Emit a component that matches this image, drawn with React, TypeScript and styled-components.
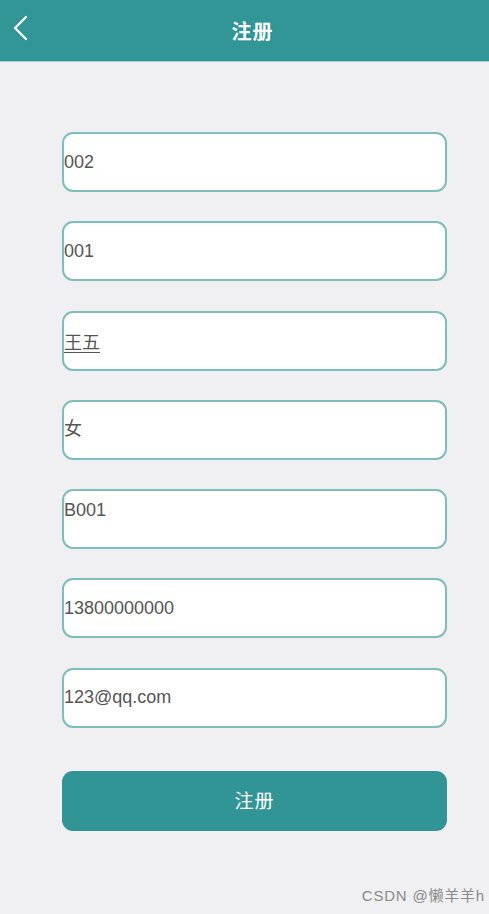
import React from "react";
import styled, { createGlobalStyle } from "styled-components";

const GlobalStyle = createGlobalStyle`
  html, body {
    margin: 0;
    padding: 0;
    background: #f0eff1;
    font-family: "Liberation Sans", "Noto Sans CJK SC", sans-serif;
  }
`;

const Page = styled.div`
  width: 489px;
  height: 914px;
  display: flex;
  flex-direction: column;
  background: #f0eff1;
  position: relative;
  overflow: hidden;
`;

const Header = styled.header`
  height: 61px;
  background: #329696;
  display: flex;
  align-items: center;
  justify-content: center;
  position: relative;
  border-bottom: 1px solid #a9cfd0;
  flex-shrink: 0;
`;

const BackButton = styled.div`
  position: absolute;
  left: 8px;
  top: 13px;
  width: 24px;
  height: 30px;
  display: flex;
  align-items: center;
  justify-content: center;
`;

const Title = styled.h1`
  margin: 0;
  font-size: 20px;
  font-weight: 700;
  color: #ffffff;
  font-family: "Noto Sans CJK SC", sans-serif;
  letter-spacing: 1px;
  padding-left: 16px;
`;

const Form = styled.div`
  display: flex;
  flex-direction: column;
  gap: 29.3px;
  padding: 70px 42px 0 62px;
`;

const Field = styled.div<{ $align: string; $pad: number }>`
  box-sizing: border-box;
  height: 60px;
  background: #ffffff;
  border: 2px solid #7dbdbb;
  border-radius: 11px;
  display: flex;
  align-items: ${(p) => p.$align};
  padding-top: ${(p) => p.$pad}px;
  flex-shrink: 0;
`;

const FieldText = styled.span<{ $underline?: boolean }>`
  font-size: 18px;
  color: #555555;
  font-family: "Liberation Sans", "Noto Sans CJK SC", sans-serif;
  text-decoration: ${(p) => (p.$underline ? "underline" : "none")};
  text-underline-offset: 3px;
`;

const SubmitButton = styled.button`
  margin: 43px 42px 0 62px;
  height: 60px;
  padding-bottom: 4px;
  flex-shrink: 0;
  border: none;
  border-radius: 11px;
  background: #329595;
  color: #ffffff;
  font-size: 19px;
  font-family: "Noto Sans CJK SC", sans-serif;
  letter-spacing: 1px;
`;

const Watermark = styled.div`
  position: absolute;
  right: 4px;
  bottom: 9px;
  font-size: 15px;
  letter-spacing: 0.8px;
  color: #8a8a8a;
  font-family: "Liberation Sans", "Noto Sans CJK SC", sans-serif;
`;

const fields = [
  { text: "002", align: "center", pad: 0 },
  { text: "001", align: "center", pad: 0 },
  { text: "王五", align: "center", pad: 0, underline: true },
  { text: "女", align: "flex-start", pad: 12 },
  { text: "B001", align: "flex-start", pad: 9 },
  { text: "13800000000", align: "center", pad: 0 },
  { text: "123@qq.com", align: "center", pad: 0 },
];

export default function App() {
  return (
    <Page>
      <GlobalStyle />
      <Header>
        <BackButton>
          <svg width="16" height="26" viewBox="0 0 16 26">
            <path
              d="M14 2 L3 13 L14 24"
              stroke="#ffffff"
              strokeWidth="2.2"
              fill="none"
              strokeLinecap="round"
              strokeLinejoin="round"
            />
          </svg>
        </BackButton>
        <Title>注册</Title>
      </Header>
      <Form>
        {fields.map((f) => (
          <Field key={f.text} $align={f.align} $pad={f.pad}>
            <FieldText $underline={f.underline}>{f.text}</FieldText>
          </Field>
        ))}
      </Form>
      <SubmitButton>注册</SubmitButton>
      <Watermark>CSDN @懒羊羊h</Watermark>
    </Page>
  );
}
